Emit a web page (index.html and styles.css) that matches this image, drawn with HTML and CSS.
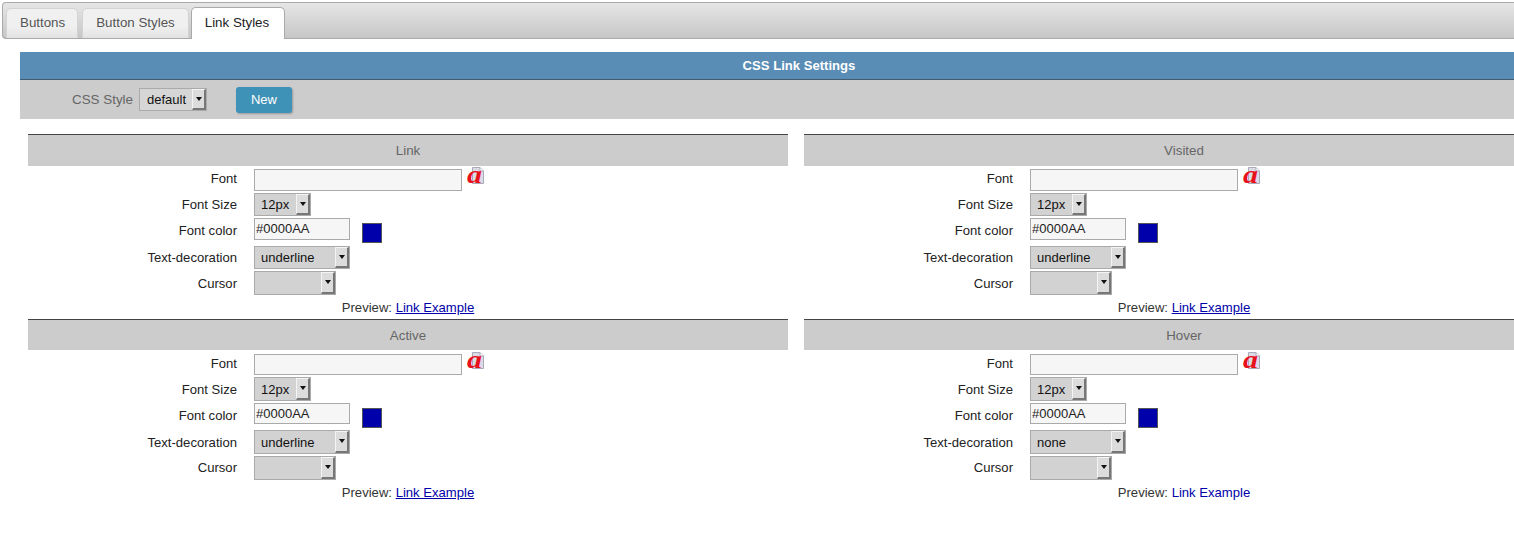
FILE: index.html
```html
<!DOCTYPE html>
<html lang="en">
<head>
<meta charset="utf-8">
<title>CSS Link Settings</title>
<link rel="stylesheet" href="styles.css">
</head>
<body>
<svg class="defs" width="0" height="0" aria-hidden="true">
  <symbol id="font-icon" viewBox="0 0 18 18">
    <path d="M5.5 .5H13L16.5 4V16.5H5.5Z" fill="#dcdce8" stroke="#a9a9b8"/>
    <path d="M13 .5V4H16.5" fill="#fff" stroke="#a9a9b8"/>
    <text x="0" y="15.5" class="icon-a" textLength="15" lengthAdjust="spacingAndGlyphs">a</text>
  </symbol>
</svg>
<nav class="tabs">
  <a class="tab first">Buttons</a>
  <a class="tab">Button Styles</a>
  <a class="tab active">Link Styles</a>
</nav>
<main class="content">
  <h1 class="title">CSS Link Settings</h1>
  <div class="toolbar">
    <label class="toolbar-label">CSS Style</label>
    <div class="select sel-style"><span class="val">default</span><span class="arrow"></span></div>
    <button class="new-btn">New</button>
  </div>
  <div class="panels">
    <section class="panel">
      <h2 class="panel-head">Link</h2>
      <div class="row row-font"><span class="lab">Font</span><input class="input wide"><svg class="font-icon"><use href="#font-icon"/></svg></div>
      <div class="row row-size"><span class="lab">Font Size</span><div class="select sel-size"><span class="val">12px</span><span class="arrow"></span></div></div>
      <div class="row row-color"><span class="lab">Font color</span><input class="input narrow" value="#0000AA"><span class="swatch"></span></div>
      <div class="row row-deco"><span class="lab">Text-decoration</span><div class="select sel-deco"><span class="val">underline</span><span class="arrow"></span></div></div>
      <div class="row row-cursor"><span class="lab">Cursor</span><div class="select sel-cursor"><span class="val"></span><span class="arrow"></span></div></div>
      <p class="preview">Preview: <a class="link under">Link Example</a></p>
    </section>
    <section class="panel">
      <h2 class="panel-head">Visited</h2>
      <div class="row row-font"><span class="lab">Font</span><input class="input wide"><svg class="font-icon"><use href="#font-icon"/></svg></div>
      <div class="row row-size"><span class="lab">Font Size</span><div class="select sel-size"><span class="val">12px</span><span class="arrow"></span></div></div>
      <div class="row row-color"><span class="lab">Font color</span><input class="input narrow" value="#0000AA"><span class="swatch"></span></div>
      <div class="row row-deco"><span class="lab">Text-decoration</span><div class="select sel-deco"><span class="val">underline</span><span class="arrow"></span></div></div>
      <div class="row row-cursor"><span class="lab">Cursor</span><div class="select sel-cursor"><span class="val"></span><span class="arrow"></span></div></div>
      <p class="preview">Preview: <a class="link under">Link Example</a></p>
    </section>
    <section class="panel low">
      <h2 class="panel-head">Active</h2>
      <div class="row row-font"><span class="lab">Font</span><input class="input wide"><svg class="font-icon"><use href="#font-icon"/></svg></div>
      <div class="row row-size"><span class="lab">Font Size</span><div class="select sel-size"><span class="val">12px</span><span class="arrow"></span></div></div>
      <div class="row row-color"><span class="lab">Font color</span><input class="input narrow" value="#0000AA"><span class="swatch"></span></div>
      <div class="row row-deco"><span class="lab">Text-decoration</span><div class="select sel-deco"><span class="val">underline</span><span class="arrow"></span></div></div>
      <div class="row row-cursor"><span class="lab">Cursor</span><div class="select sel-cursor"><span class="val"></span><span class="arrow"></span></div></div>
      <p class="preview">Preview: <a class="link under">Link Example</a></p>
    </section>
    <section class="panel low">
      <h2 class="panel-head">Hover</h2>
      <div class="row row-font"><span class="lab">Font</span><input class="input wide"><svg class="font-icon"><use href="#font-icon"/></svg></div>
      <div class="row row-size"><span class="lab">Font Size</span><div class="select sel-size"><span class="val">12px</span><span class="arrow"></span></div></div>
      <div class="row row-color"><span class="lab">Font color</span><input class="input narrow" value="#0000AA"><span class="swatch"></span></div>
      <div class="row row-deco"><span class="lab">Text-decoration</span><div class="select sel-deco"><span class="val">none</span><span class="arrow"></span></div></div>
      <div class="row row-cursor"><span class="lab">Cursor</span><div class="select sel-cursor"><span class="val"></span><span class="arrow"></span></div></div>
      <p class="preview">Preview: <a class="link">Link Example</a></p>
    </section>
  </div>
</main>
</body>
</html>
```
FILE: styles.css
```css
* { box-sizing: border-box; }
html, body { margin: 0; height: 547px; overflow: hidden; background: #fff; }
body { font-family: "Liberation Sans", Arial, sans-serif; font-size: 13.1px; color: #222; width: 1514px; }
.defs { position: absolute; }
.icon-a { font-family: "Liberation Serif", serif; font-style: italic; font-weight: bold; font-size: 25px; fill: #e8121c; }

.tabs {
  margin: 2px 0 0 2px;
  height: 37px;
  padding: 4px 0 0 3px;
  display: flex;
  border: 1px solid #aaa;
  border-right: 0;
  border-radius: 4px 0 0 4px;
  background: linear-gradient(#e6e6e6, #c6c6c6);
}
.tab {
  height: 30px;
  margin-top: 1px;
  padding: 6px 13px 0;
  margin-right: 4px;
  color: #555;
  font-size: 13.33px;
  line-height: 15px;
  white-space: nowrap;
  border: 1px solid #d3d3d3;
  border-bottom: 0;
  border-radius: 5px 5px 0 0;
  background: linear-gradient(#f0f0f0 60%, #e2e2e2);
}
.tab.first { padding-right: 12px; }
.tab.active {
  height: 32px;
  margin: 0 0 0 -2px;
  padding: 7px 15px 0 13px;
  color: #222;
  background: #fff;
  border-color: #aaa;
}

.content { margin: 13px 0 0 20px; width: 1558px; }
.title {
  margin: 0;
  height: 28px;
  background: #5a8db5;
  border-bottom: 1px solid #3f5c73;
  color: #fff;
  font-size: 13.1px;
  font-weight: bold;
  line-height: 27px;
  text-align: center;
}
.toolbar {
  height: 39px;
  background: #ccc;
  display: flex;
  align-items: center;
  padding: 0 0 0 52px;
}
.toolbar-label { color: #666; width: 67px; font-size: 13.4px; }
.new-btn {
  margin-left: 29px;
  width: 56px;
  height: 26px;
  border: 0;
  border-radius: 3px;
  background: #3f92b7;
  color: #fff;
  font: 13px "Liberation Sans", Arial, sans-serif;
  box-shadow: 1px 1px 2px #999;
}

.panels {
  margin: 15px 0 0 8px;
  display: grid;
  grid-template-columns: 760px 760px;
  column-gap: 16px;
}
.panel { height: 185px; }
.panel-head {
  margin: 0;
  height: 32px;
  background: #ccc;
  border-top: 1px solid #444;
  color: #666;
  font-size: 13.33px;
  font-weight: normal;
  line-height: 31px;
  text-align: center;
}
.row { display: flex; align-items: flex-start; }
.lab { width: 209px; margin-right: 17px; text-align: right; color: #222; line-height: 15px; }
.row-font { margin-top: 3px; height: 24px; }
.row-font .lab { padding-top: 2px; }
.row-size { height: 25px; }
.row-size .lab { padding-top: 4px; }
.row-color { height: 28px; }
.row-color .lab { padding-top: 5px; }
.row-deco { height: 25px; }
.row-deco .lab { padding-top: 4px; }
.row-cursor { height: 24px; }
.row-cursor .lab { padding-top: 5px; }

.low .panel-head { height: 31px; }
.low .row-font { margin-top: 4px; height: 23px; }
.low .row-size { height: 26px; }
.low .row-size .lab { padding-top: 5px; }
.low .row-color { height: 27px; }
.low .row-deco { height: 26px; }
.low .row-deco .lab { padding-top: 5px; }
.low .row-cursor .lab { padding-top: 4px; }
.low .wide { height: 21px; }
.low .narrow { height: 21px; padding-bottom: 1px; }
.low .sel-size, .low .sel-deco { height: 24px; line-height: 23px; }

.input {
  display: block;
  height: 22px;
  border: 1px solid #aaa;
  background: #f6f6f6;
  color: #222;
  font: 13px "Liberation Sans", Arial, sans-serif;
  padding: 0 1px;
  outline: 0;
  border-radius: 0;
}
.wide { width: 208px; }
.narrow { width: 96px; padding-bottom: 1px; }
.font-icon { width: 18px; height: 18px; margin: -2px 0 0 5px; }
.swatch {
  width: 20px;
  height: 20px;
  margin: 5px 0 0 12px;
  background: #0000aa;
  border: 1px solid #555;
}

.select {
  display: flex;
  justify-content: space-between;
  height: 23px;
  border: 1px solid #aaa;
  background: #d2d2d2;
  color: #111;
  font-size: 13px;
  line-height: 22px;
}
.val { padding-left: 6px; }
.arrow {
  position: relative;
  width: 14px;
  background: #dcdcdc;
  border-style: solid;
  border-width: 1px 2px 2px 1px;
  border-color: #f4f4f4 #777 #777 #f4f4f4;
}
.arrow::after {
  content: "";
  position: absolute;
  left: 2.5px;
  top: 7px;
  border: 3.5px solid transparent;
  border-top: 4px solid #111;
  border-bottom: 0;
}
.sel-style { width: 68px; background: #d6d6d6; }
.sel-style .val { padding-left: 7px; }
.sel-size { width: 57px; }
.sel-deco { width: 96px; }
.sel-cursor { width: 82px; height: 24px; }

.preview { margin: 5px 0 0; text-align: center; line-height: 15px; color: #333; }
.link { color: #0000aa; }
.under { text-decoration: underline; }
```
